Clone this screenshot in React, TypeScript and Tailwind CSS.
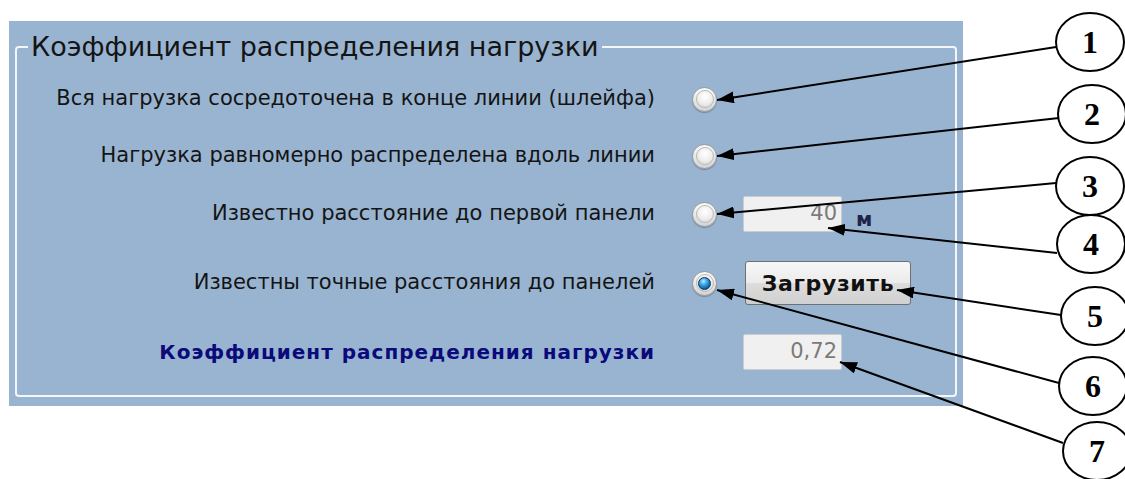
import type { ReactNode } from "react";

const FONT = "font-['DejaVu_Sans','Liberation_Sans',sans-serif]";

function Radio({ checked = false }: { checked?: boolean }) {
  return (
    <div className="flex h-[25px] w-[25px] shrink-0 items-center justify-center rounded-full border border-[#9c9c9c] bg-[linear-gradient(180deg,#fbfbfb,#d4d4d4)] shadow-[0_1px_1px_rgba(0,0,0,0.25)]">
      <div className="flex h-[18px] w-[18px] items-center justify-center rounded-full border border-[#b9b9b9] bg-[radial-gradient(circle_at_50%_35%,#ffffff_0%,#eeeeee_55%,#cfcfcf_100%)]">
        {checked && (
          <div className="h-[13px] w-[13px] rounded-full border border-[#0b2f52] bg-[radial-gradient(circle_at_40%_30%,#bdeaff_0%,#3ba7e6_35%,#0d5f9e_75%,#093c67_100%)]" />
        )}
      </div>
    </div>
  );
}

function Field({ value }: { value: string }) {
  return (
    <div className="flex h-[36px] w-[99px] shrink-0 items-center justify-end rounded-[2px] border border-[#c9cdd2] bg-[#f0f0f0] pr-[4px] text-[21px] text-[#7a7a7a]">
      {value}
    </div>
  );
}

function Row({
  label,
  className,
  labelClass = "text-[21px] text-[#141414]",
  children,
}: {
  label: string;
  className: string;
  labelClass?: string;
  children?: ReactNode;
}) {
  return (
    <div className={`flex items-center ${className}`}>
      <div className={`w-[638px] shrink-0 whitespace-nowrap text-right ${labelClass}`}>{label}</div>
      {children}
    </div>
  );
}

// callout numbers drawn on the right, with arrows to the controls
const callouts = [
  { n: 1, cx: 1090, cy: 42, from: [1056, 47], to: [717, 100] },
  { n: 2, cx: 1092, cy: 114, from: [1059, 118], to: [717, 156] },
  { n: 3, cx: 1090, cy: 186, from: [1056, 183], to: [717, 214] },
  { n: 4, cx: 1091, cy: 244, from: [1057, 253], to: [828, 228] },
  { n: 5, cx: 1095, cy: 316, from: [1061, 315], to: [897, 290] },
  { n: 6, cx: 1093, cy: 386, from: [1059, 383], to: [717, 290] },
  { n: 7, cx: 1097, cy: 451, from: [1063, 443], to: [840, 362] },
];

function Callouts() {
  return (
    <svg
      className="pointer-events-none absolute left-0 top-0"
      width={1125}
      height={479}
      viewBox="0 0 1125 479"
    >
      <defs>
        <marker
          id="tip"
          viewBox="0 0 17 12"
          refX="17"
          refY="6"
          markerWidth="17"
          markerHeight="12"
          markerUnits="userSpaceOnUse"
          orient="auto"
        >
          <path d="M0 0 L17 6 L0 12 Z" fill="#000" />
        </marker>
      </defs>
      {callouts.map((c) => (
        <g key={c.n}>
          <line
            x1={c.from[0]}
            y1={c.from[1]}
            x2={c.to[0]}
            y2={c.to[1]}
            stroke="#000"
            strokeWidth={2}
            markerEnd="url(#tip)"
          />
          <ellipse
            cx={c.cx}
            cy={c.cy}
            rx={34}
            ry={29}
            fill="#fff"
            stroke="#000"
            strokeWidth={2}
          />
          <text
            x={c.cx}
            y={c.cy + 11}
            textAnchor="middle"
            fontFamily="'Liberation Serif', serif"
            fontWeight="bold"
            fontSize={32}
            fill="#000"
          >
            {c.n}
          </text>
        </g>
      ))}
    </svg>
  );
}

export default function App() {
  return (
    <div className={`relative h-[479px] w-[1125px] overflow-hidden bg-white pl-[9px] pt-[21px] ${FONT}`}>
      <div className="h-[385px] w-[954px] bg-[#99b4d1] px-[6px] pt-[11px]">
        <fieldset className="rounded-[4px] border-2 border-[#f3f6fa] pb-[23px]">
          <legend className="ml-[11px] px-[3px] text-[27px] leading-[30px] text-[#141414]">
            Коэффициент распределения нагрузки
          </legend>

          <Row label="Вся нагрузка сосредоточена в конце линии (шлейфа)" className="mt-[17px] h-[40px]">
            <div className="ml-[37px]">
              <Radio />
            </div>
          </Row>

          <Row label="Нагрузка равномерно распределена вдоль линии" className="mt-[17px] h-[40px]">
            <div className="ml-[37px]">
              <Radio />
            </div>
          </Row>

          <Row label="Известно расстояние до первой панели" className="mt-[18px] h-[40px]">
            <div className="ml-[37px]">
              <Radio />
            </div>
            <div className="ml-[26px]">
              <Field value="40" />
            </div>
            <span className="mb-[3px] ml-[14px] self-end text-[20px] font-bold leading-[24px] text-[#20244a]">
              м
            </span>
          </Row>

          <Row label="Известны точные расстояния до панелей" className="mt-[27px] h-[44px]">
            <div className="ml-[37px]">
              <Radio checked />
            </div>
            <button
              type="button"
              className="ml-[28px] h-[44px] w-[166px] rounded-[3px] border border-[#707070] bg-[linear-gradient(180deg,#f7f7f7_0%,#ebebeb_50%,#dcdcdc_51%,#d0d0d0_100%)] text-[22px] font-bold tracking-[0.6px] text-[#111]"
            >
              Загрузить
            </button>
          </Row>

          <Row
            label="Коэффициент распределения нагрузки"
            className="mt-[27px] h-[40px]"
            labelClass="text-[20px] font-bold tracking-[1px] text-[#0a0a7a]"
          >
            <div className="ml-[88px]">
              <Field value="0,72" />
            </div>
          </Row>
        </fieldset>
      </div>
      <Callouts />
    </div>
  );
}
